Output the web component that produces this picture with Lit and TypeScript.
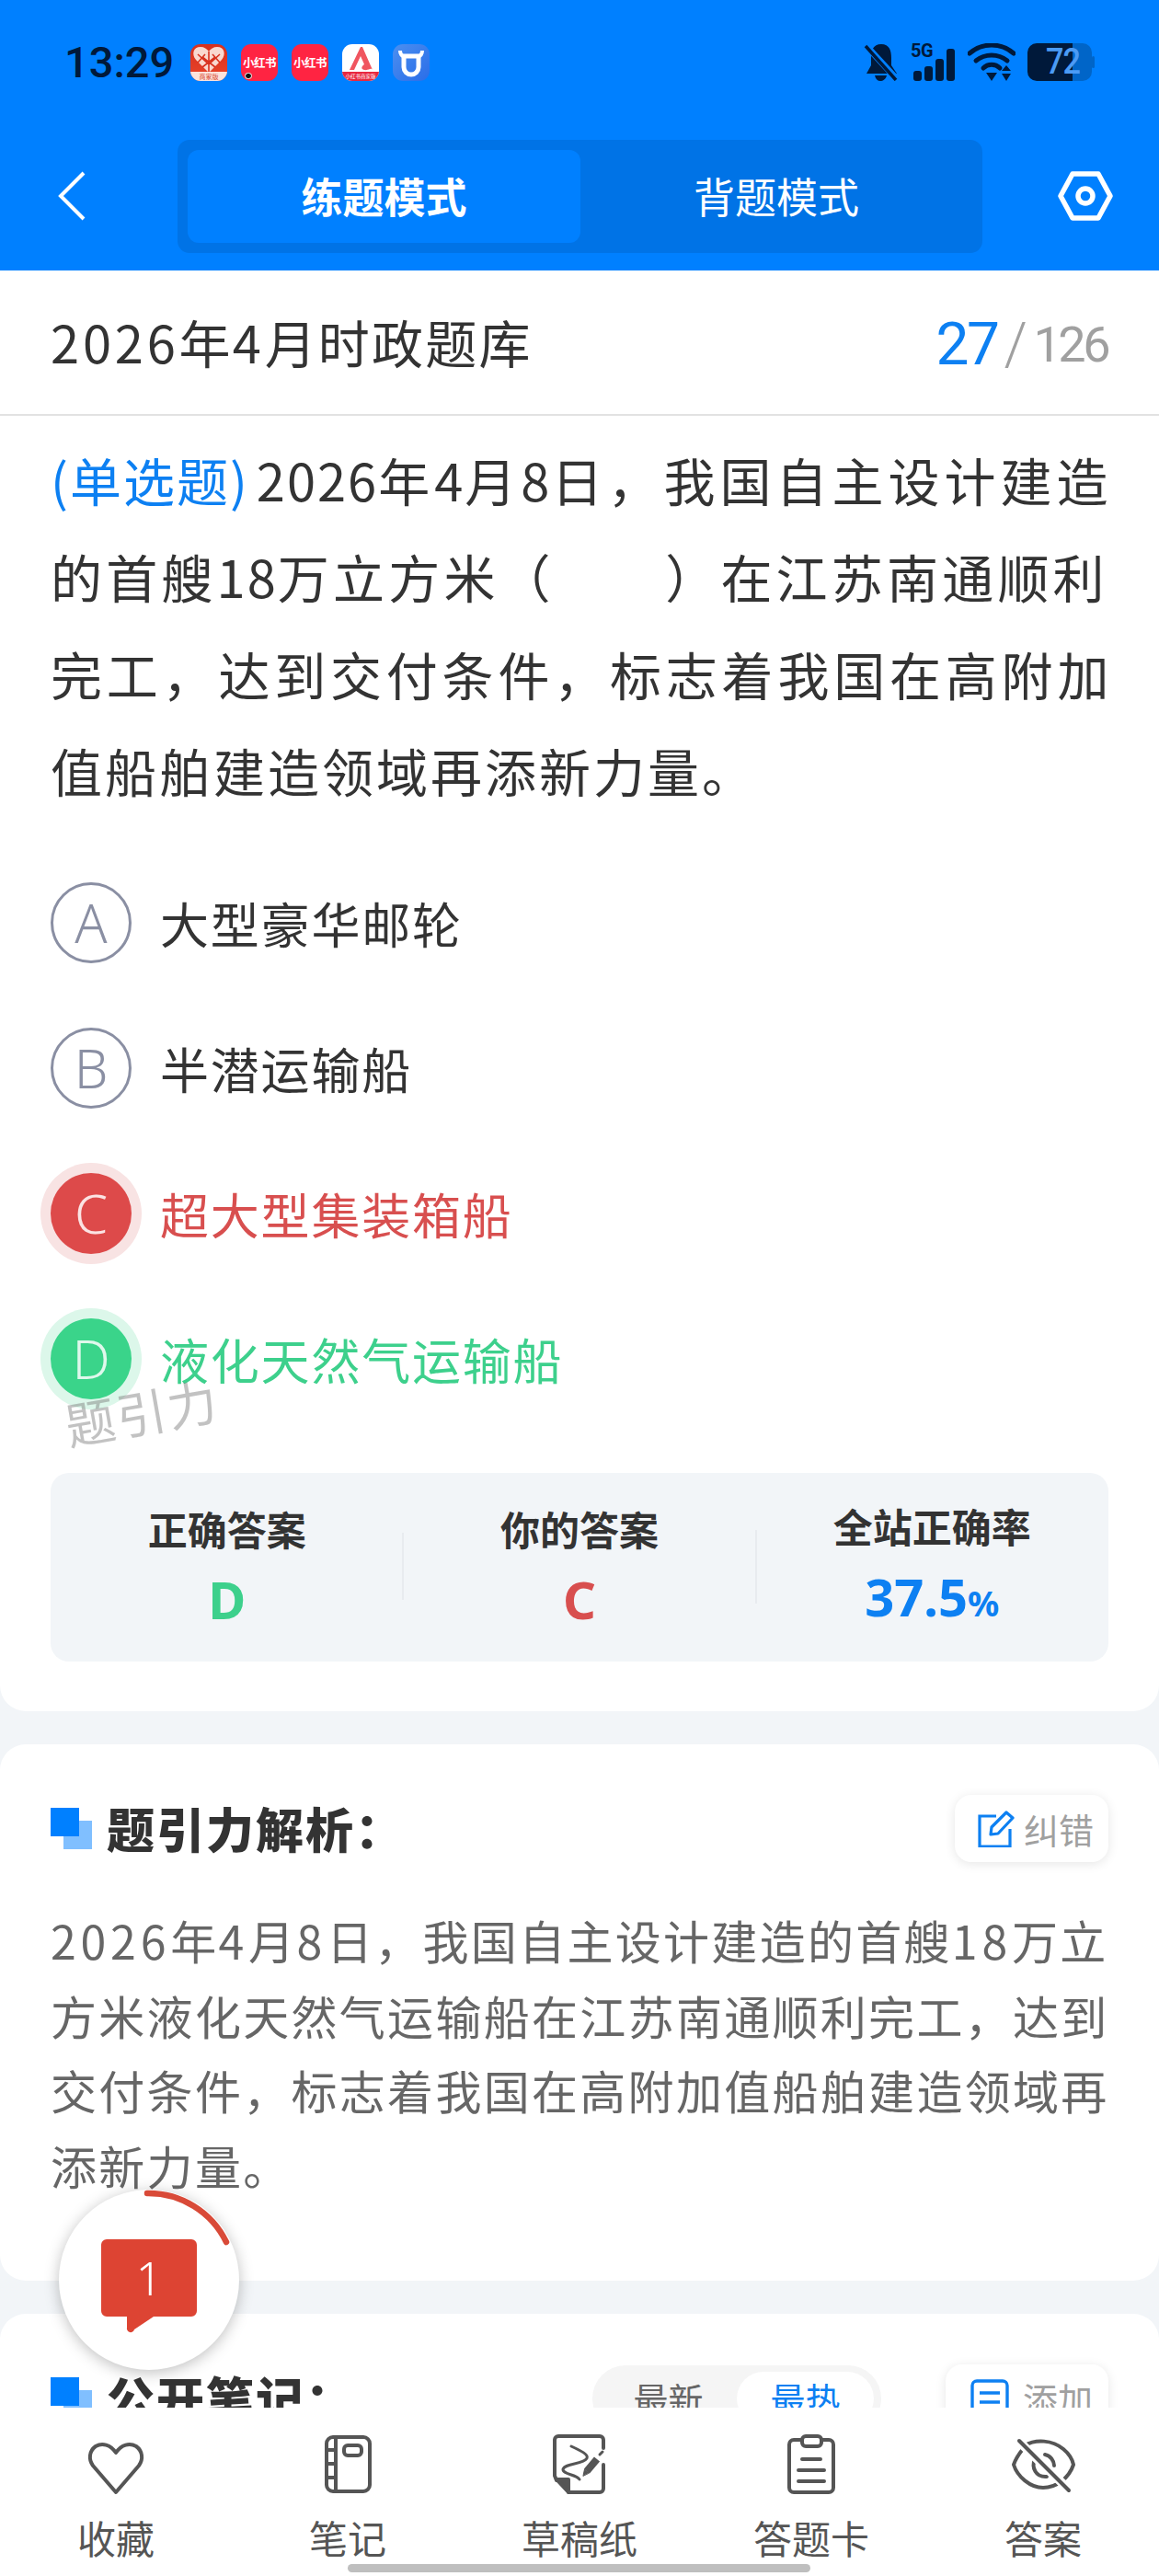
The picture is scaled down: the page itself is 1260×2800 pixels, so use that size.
import { LitElement, html, css, svg } from "lit";
import { customElement } from "lit/decorators.js";

const tabs = [
  { label: "收藏", icon: svg`<path d="M31 54 L6 25 C1 18 2 9 9 4 C16 0 25 2 31 11 C37 2 46 0 53 4 C60 9 61 18 56 25 Z" />`, x: 62, y: 55 },
  {
    label: "笔记",
    icon: svg`<rect x="2" y="2" width="47" height="59" rx="7"/><path d="M12 2V61M2 16H12M2 31H12M2 46H12"/><rect x="21" y="11" width="19" height="11" rx="4"/>`,
    x: 51,
    y: 63,
  },
  {
    label: "草稿纸",
    icon: svg`<path d="M54 14V5a4 4 0 0 0-4-4H5a4 4 0 0 0-4 4V44L3 49"/><path d="M16 62H50a4 4 0 0 0 4-4V32"/>
      <path d="M3 48H16V62Z" fill="#555"/>
      <path d="M19 12C30 17 38 21 36 25C32 32 12 30 10 37C10 43 24 42 28 48" stroke-width="3"/>
      <path d="M36 39L47 26" stroke-width="8" stroke-linecap="butt"/>
      <path d="M32 44L33.5 37L38 41Z" stroke-width="1" fill="#555"/>
      <path d="M50 21L53 18" stroke-width="3"/>`,
    x: 56,
    y: 63,
  },
  {
    label: "答题卡",
    icon: svg`<path d="M16 6H8a5 5 0 0 0-5 5v47a5 5 0 0 0 5 5h38a5 5 0 0 0 5-5V11a5 5 0 0 0-5-5h-8"/><rect x="17" y="2" width="21" height="11" rx="4"/><path d="M17 27H37M13 39H41M13 51H41"/>`,
    x: 54,
    y: 64,
  },
  {
    label: "答案",
    icon: svg`<path d="M14 6C26 -1 44 0 56 10C62 15 66 22 67 27C62 42 48 52 34 52C20 52 6 40 2 27C4 21 8 15 12 10"/>
      <path d="M25 21C21 30 26 41 38 40M36 16C42 17 46 23 46 28"/>
      <path d="M8 2L62 54" stroke="#fff" stroke-width="10"/>
      <path d="M8 1L62 55"/>`,
    x: 68,
    y: 58,
  },
];

// Latin digits keep their own tracking inside the CJK runs.
const n = (v: string) => html`<span class="num">${v}</span>`;

@customElement("app-root")
export class AppRoot extends LitElement {
  static styles = css`
    :host {
      display: flex;
      flex-direction: column;
      position: relative;
      width: 1260px;
      height: 2800px;
      overflow: hidden;
      background: #f2f5f8;
      font-family: "Noto Sans CJK SC", "Noto Sans", sans-serif;
      color: #333;
    }
    .top {
      background: #0080ff;
      height: 294px;
      flex: none;
      display: flex;
      flex-direction: column;
    }
    .status {
      height: 152px;
      padding: 47px 70px 0;
      box-sizing: border-box;
      display: flex;
      align-items: flex-start;
    }
    .clock {
      font: 500 47px/42px Roboto, sans-serif;
      color: #00193a;
      width: 137px;
    }
    .apps {
      display: flex;
      gap: 15px;
      margin-top: 1px;
    }
    .app {
      width: 40px;
      height: 40px;
      border-radius: 11px;
      position: relative;
      overflow: hidden;
      display: flex;
      align-items: center;
      justify-content: center;
    }
    .app svg {
      display: block;
    }
    .app.pdd {
      background: linear-gradient(#d8301d, #e8452b);
      flex-direction: column;
      justify-content: flex-start;
    }
    .pdd-foot {
      position: absolute;
      left: 0;
      right: 0;
      bottom: 0;
      height: 10px;
      background: #fbe3dc;
      color: #d8452f;
      font-size: 7px;
      line-height: 10px;
      text-align: center;
    }
    .app.rb {
      background: #ff2442;
      color: #fff;
      font-size: 12.5px;
      font-weight: 700;
      letter-spacing: -0.5px;
      line-height: 40px;
      white-space: nowrap;
    }
    .rb-dot {
      position: absolute;
      left: 4px;
      bottom: 2px;
      width: 8px;
      height: 7px;
      border-radius: 4px;
      background: #111;
      border: 1px solid #fff;
      box-sizing: border-box;
    }
    .app.white {
      background: #fff;
    }
    .white-foot {
      position: absolute;
      left: 0;
      right: 0;
      bottom: 0;
      height: 10px;
      background: #e8283f;
      color: #fff;
      font-size: 5.5px;
      line-height: 10px;
      text-align: center;
      white-space: nowrap;
    }
    .app.cow {
      background: linear-gradient(135deg, #4b8ff0, #2a6de8);
    }
    .sys {
      margin-left: auto;
      display: flex;
      align-items: flex-start;
      gap: 13px;
    }
    .signal {
      position: relative;
      width: 49px;
      height: 41px;
    }
    .signal svg {
      position: absolute;
      left: 0;
      top: 0;
    }
    .signal b {
      position: absolute;
      left: 0;
      top: -2px;
      font: 700 20px/20px Roboto, sans-serif;
      color: #00193a;
      letter-spacing: -0.5px;
    }
    .battery {
      width: 73px;
      height: 41px;
      position: relative;
    }
    .battery span {
      position: absolute;
      left: 20px;
      top: 0;
      font: 500 38px/41px Roboto, sans-serif;
      color: #4b9bf5;
      letter-spacing: -1px;
      transform: scaleX(0.9);
      transform-origin: left center;
    }
    .nav {
      flex: 1;
      display: flex;
      align-items: flex-start;
      padding: 0 50px 0 62px;
    }
    .back {
      width: 32px;
      height: 54px;
      margin-top: 34px;
      flex: none;
    }
    .seg {
      margin-left: 99px;
      width: 875px;
      height: 123px;
      background: #0073e6;
      border-radius: 13px;
      flex: none;
      display: flex;
      box-sizing: border-box;
      padding: 11px;
    }
    .seg div {
      flex: 1;
      display: flex;
      align-items: center;
      justify-content: center;
      color: #fff;
      font-size: 45px;
      border-radius: 12px;
      padding-bottom: 3px;
    }
    .seg .on {
      background: #0080ff;
      font-weight: 700;
      flex: none;
      width: 427px;
    }
    .gear {
      margin-left: 82px;
      margin-top: 34px;
      flex: none;
    }
    .scroll {
      flex: 1;
      min-height: 0;
      overflow: hidden;
      display: flex;
      flex-direction: column;
    }
    .titlebar {
      flex: none;
      height: 158px;
      box-sizing: border-box;
      background: #fff;
      border-bottom: 2px solid #e2e2e2;
      display: flex;
      align-items: center;
      justify-content: space-between;
      padding: 0 55px;
    }
    .titlebar h1 {
      margin: 0;
      font-size: 56px;
      font-weight: 400;
      letter-spacing: 2.2px;
      color: #333;
      padding-bottom: 4px;
    }
    .titlebar .num {
      letter-spacing: 3.8px;
    }
    .count {
      font-family: Roboto, sans-serif;
      font-weight: 400;
      display: flex;
      align-items: center;
      color: #a0a0a0;
      font-size: 54px;
      line-height: 70px;
      letter-spacing: -3.5px;
      padding: 5px 1px 0 0;
    }
    .count em {
      font-style: normal;
      color: #0d80f2;
      font-size: 64px;
      letter-spacing: -2.5px;
    }
    .count i {
      font-style: normal;
      font-weight: 300;
      font-size: 64px;
      margin: 0 10px 0 7px;
    }
    .q-card {
      flex: none;
      background: #fff;
      border-radius: 0 0 28px 28px;
      padding: 16px 55px 54px;
      position: relative;
    }
    .stem {
      margin: 0;
      font-size: 56px;
      line-height: 105.3px;
      color: #333;
      white-space: nowrap;
    }
    .stem .num {
      letter-spacing: 2px;
    }
    .stem .tag {
      color: #0d80f2;
      letter-spacing: 2px;
      margin-right: 8px;
    }
    .stem .l1 {
      letter-spacing: 5px;
    }
    .stem .l2 {
      letter-spacing: 4.2px;
    }
    .stem .l3 {
      letter-spacing: 4.8px;
    }
    .stem .l4 {
      letter-spacing: 3px;
    }
    .options {
      margin-top: 70px;
      display: flex;
      flex-direction: column;
      gap: 70px;
    }
    .option {
      display: flex;
      align-items: center;
      gap: 31px;
      font-size: 53px;
      letter-spacing: 1.8px;
      line-height: 88px;
    }
    .mark {
      flex: none;
      width: 88px;
      height: 88px;
      box-sizing: border-box;
      border-radius: 50%;
      border: 3px solid #8a8fa3;
      color: #8a8fa3;
      display: flex;
      align-items: center;
      justify-content: center;
      font: 300 58px/1 "Noto Sans", sans-serif;
      letter-spacing: 0;
    }
    .option.bad {
      color: #d84f4f;
    }
    .option.bad .mark {
      border: none;
      background: #dd4a4a;
      color: #fbe3e3;
      box-shadow: 0 0 0 11px #f8e3e3;
    }
    .option.good {
      color: #3dd08c;
    }
    .option.good .mark {
      border: none;
      background: #3ad48a;
      color: #dff8ec;
      box-shadow: 0 0 0 11px #dcf7ea;
    }
    .mark-wm {
      position: absolute;
      left: 70px;
      top: 1052px;
      font-size: 54px;
      line-height: 60px;
      color: rgba(120, 120, 120, 0.45);
      transform: rotate(-10deg);
      letter-spacing: 2px;
    }
    .stats {
      margin-top: 80px;
      height: 205px;
      padding-bottom: 8px;
      box-sizing: border-box;
      background: #f2f5f8;
      border-radius: 20px;
      display: grid;
      grid-template-columns: 1fr 1fr 1fr;
      align-items: center;
    }
    .stat {
      position: relative;
      text-align: center;
    }
    .stat + .stat::before {
      content: "";
      position: absolute;
      left: -1px;
      top: 35px;
      bottom: 29px;
      width: 2px;
      background: #e8ebef;
    }
    .stat h3 {
      margin: 0;
      font-size: 43px;
      line-height: 60px;
      font-weight: 700;
      color: #333;
    }
    .stat strong {
      display: block;
      margin-top: 17px;
      font: 700 56px/60px "Noto Sans", sans-serif;
    }
    .stat strong small {
      font-size: 38px;
    }
    .green {
      color: #3dd08c;
    }
    .red {
      color: #d84f4f;
    }
    .blue {
      color: #0d80f2;
    }
    .card {
      flex: none;
      background: #fff;
      border-radius: 28px;
      margin-top: 36px;
      padding: 55px 55px 0;
    }
    .head {
      display: flex;
      align-items: center;
      height: 73px;
    }
    .cubes {
      flex: none;
      width: 45px;
      height: 45px;
      position: relative;
    }
    .cubes::before {
      content: "";
      position: absolute;
      right: 0;
      bottom: 0;
      width: 31px;
      height: 31px;
      background: #80bfff;
    }
    .cubes::after {
      content: "";
      position: absolute;
      left: 0;
      top: 0;
      width: 31px;
      height: 31px;
      background: #0080ff;
    }
    .head h2 {
      margin: 0 0 0 16px;
      padding-bottom: 2px;
      font-size: 52px;
      font-weight: 900;
      letter-spacing: 2px;
      color: #333;
      flex: 1;
    }
    .chip {
      flex: none;
      height: 73px;
      box-sizing: border-box;
      border-radius: 18px;
      background: #fff;
      box-shadow: 0 2px 12px rgba(0, 0, 0, 0.1);
      display: flex;
      align-items: center;
      gap: 10px;
      padding: 0 16px 0 25px;
      color: #a0a0a0;
      font-size: 38px;
    }
    .chip.add {
      gap: 15px;
      padding: 0 17px 0 27px;
    }
    .explain {
      margin: 44px 0 0;
      padding-bottom: 85px;
      font-size: 50px;
      line-height: 81.5px;
      letter-spacing: 2.3px;
      color: #666;
      white-space: nowrap;
    }
    .explain .num {
      letter-spacing: 4.8px;
    }
    .pills {
      flex: none;
      width: 314px;
      height: 72px;
      border-radius: 36px;
      background: #f5f5f5;
      display: flex;
      align-items: center;
      padding: 7px 8px;
      box-sizing: border-box;
      font-size: 38px;
      color: #666;
      margin-right: 70px;
    }
    .pills span {
      flex: 1;
      text-align: center;
    }
    .pills .on {
      flex: none;
      width: 149px;
      background: #fff;
      color: #0d80f2;
      border-radius: 30px;
      line-height: 58px;
    }
    .dock {
      flex: none;
      height: 183px;
      background: #fff;
      display: grid;
      grid-template-columns: repeat(5, 1fr);
      position: relative;
    }
    .dock div {
      display: flex;
      flex-direction: column;
      align-items: center;
      color: #555;
      font-size: 42px;
      line-height: 54px;
    }
    .dock .ico {
      height: 93px;
      display: flex;
      align-items: flex-end;
      justify-content: center;
      margin-bottom: 21px;
    }
    .dock svg {
      fill: none;
      stroke: #555;
      stroke-width: 4;
      stroke-linecap: round;
      stroke-linejoin: round;
      overflow: visible;
    }
    .home {
      position: absolute;
      left: 378px;
      top: 170px;
      width: 503px;
      height: 9px;
      border-radius: 5px;
      background: #bfbfbf;
    }
    .float {
      position: absolute;
      left: 64px;
      top: 2380px;
      width: 196px;
      height: 196px;
      border-radius: 50%;
      background: #fff;
      box-shadow: 0 3px 16px rgba(0, 0, 0, 0.25);
    }
    .float svg {
      position: absolute;
      inset: 0;
    }
    .float span {
      position: absolute;
      left: 46px;
      top: 54px;
      width: 104px;
      height: 84px;
      display: flex;
      align-items: center;
      justify-content: center;
      color: #fff;
      font: 300 50px/1 "Noto Sans", sans-serif;
    }
  `;

  render() {
    return html`
      <header class="top">
        <div class="status">
          <div class="clock">13:29</div>
          <div class="apps">
            <div class="app pdd">
              <svg width="40" height="32" viewBox="0 0 40 32">
                <path d="M20 31L6 17C1 11 3 3 11 3C15 3 18 5 20 8C22 5 25 3 29 3C37 3 39 11 34 17Z" fill="#f9d8cf" />
                <path d="M20 8V31M8 11L20 22L32 11M8 20L16 11M32 20L24 11M13 25L27 14M27 25L13 14" stroke="#d8301d" stroke-width="1.6" fill="none" />
              </svg>
              <div class="pdd-foot">商家版</div>
            </div>
            <div class="app rb">小红书<i class="rb-dot"></i></div>
            <div class="app rb">小红书</div>
            <div class="app white">
              <svg width="40" height="40" viewBox="0 0 40 40">
                <path d="M20 3L8 28H13L20 13L24 22C21 24 20 27 24 28C29 29 31 25 33 28L22 3Z" fill="#f0555f" />
              </svg>
              <div class="white-foot">小红书商家版</div>
            </div>
            <div class="app cow">
              <svg width="40" height="40" viewBox="0 0 40 40" fill="none">
                <path d="M12 13H28V25A8 8 0 0 1 12 25Z" stroke="#fff" stroke-width="5" />
                <path d="M8 7C8 11 10 13 13 14M32 7C32 11 30 13 27 14" stroke="#fff" stroke-width="4" />
              </svg>
            </div>
          </div>
          <div class="sys">
            <svg width="38" height="41" viewBox="0 0 38 41">
              <path d="M19 1C28 1 30 8 30 16V24L36 33H3L8 24V16C8 8 10 1 19 1ZM12 35H25C24 39 21 41 18 41C15 41 13 39 12 35Z" fill="#00193a" />
              <path d="M1 1L36 39" stroke="#0080ff" stroke-width="7" />
              <path d="M2 3L35 40" stroke="#00193a" stroke-width="3.5" />
            </svg>
            <div class="signal">
              <b>5G</b>
              <svg width="49" height="41" viewBox="0 0 49 41">
                <rect x="3" y="30" width="9" height="11" rx="3" fill="#00193a" />
                <rect x="15" y="25" width="9" height="16" rx="3" fill="#00193a" />
                <rect x="27" y="17" width="9" height="24" rx="3" fill="#00193a" />
                <rect x="39" y="6" width="9" height="35" rx="3" fill="#00193a" />
              </svg>
            </div>
            <svg width="52" height="41" viewBox="0 0 52 41" fill="none">
              <path d="M2 11C16 -1 36 -1 50 11" stroke="#00193a" stroke-width="5" stroke-linecap="round" />
              <path d="M9 19C19 11 33 11 43 19" stroke="#00193a" stroke-width="5" stroke-linecap="round" />
              <path d="M17 27C22 22 30 22 35 27" stroke="#00193a" stroke-width="5" stroke-linecap="round" />
              <path d="M20 32H32L26 41Z" fill="#00193a" />
              <path d="M42 24L47 30H37ZM42 41L37 33H47Z" fill="#00193a" />
            </svg>
            <div class="battery">
              <svg width="73" height="41" viewBox="0 0 73 41">
                <path d="M49 0H60a10 10 0 0 1 10 10V31a10 10 0 0 1-10 10H49Z" fill="#0065c8" />
                <rect x="70" y="14" width="3" height="13" rx="1.5" fill="#0065c8" />
                <path d="M10 0H49V41H10A10 10 0 0 1 0 31V10A10 10 0 0 1 10 0Z" fill="#00193a" />
              </svg>
              <span>72</span>
            </div>
          </div>
        </div>
        <div class="nav">
          <svg class="back" viewBox="0 0 32 54" fill="none">
            <path d="M29 2L4 27L29 52" stroke="#fff" stroke-width="4" />
          </svg>
          <div class="seg">
            <div class="on">练题模式</div>
            <div>背题模式</div>
          </div>
          <svg class="gear" width="60" height="54" viewBox="0 0 60 54" fill="none">
            <path d="M16 3H44L57 27L44 51H16L3 27Z" stroke="#fff" stroke-width="5.5" stroke-linejoin="round" />
            <circle cx="30" cy="27" r="8" stroke="#fff" stroke-width="5.5" />
          </svg>
        </div>
      </header>

      <main class="scroll">
        <section class="titlebar">
          <h1>${n("2026")}年${n("4")}月时政题库</h1>
          <div class="count"><em>27</em><i>/</i>126</div>
        </section>

        <section class="q-card">
          <p class="stem">
            <span class="tag">(单选题)</span><span class="l1">${n("2026")}年${n("4")}月${n("8")}日，我国自主设计建造</span><br /><span class="l2">的首艘${n("18")}万立方米（　　）在江苏南通顺利</span><br /><span class="l3">完工，达到交付条件，标志着我国在高附加</span><br /><span class="l4">值船舶建造领域再添新力量。</span>
          </p>
          <div class="options">
            <div class="option"><div class="mark">A</div>大型豪华邮轮</div>
            <div class="option"><div class="mark">B</div>半潜运输船</div>
            <div class="option bad"><div class="mark">C</div>超大型集装箱船</div>
            <div class="option good"><div class="mark">D</div>液化天然气运输船</div>
          </div>
          <div class="stats">
            <div class="stat"><h3>正确答案</h3><strong class="green">D</strong></div>
            <div class="stat"><h3>你的答案</h3><strong class="red">C</strong></div>
            <div class="stat"><h3>全站正确率</h3><strong class="blue">37.5<small>%</small></strong></div>
          </div>
          <div class="mark-wm">题引力</div>
        </section>

        <section class="card">
          <div class="head">
            <div class="cubes"></div>
            <h2>题引力解析：</h2>
            <div class="chip">
              <svg width="40" height="40" viewBox="0 0 40 40" fill="none" stroke="#0d80f2" stroke-width="3.2">
                <path d="M20 6H2V39H35V20" />
                <path d="M14 26L15 18L31 2L38 8L22 25Z" stroke-linejoin="round" />
              </svg>
              纠错
            </div>
          </div>
          <p class="explain">
            ${n("2026")}年${n("4")}月${n("8")}日，我国自主设计建造的首艘${n("18")}万立<br />方米液化天然气运输船在江苏南通顺利完工，达到<br />交付条件，标志着我国在高附加值船舶建造领域再<br />添新力量。
          </p>
        </section>

        <section class="card">
          <div class="head">
            <div class="cubes"></div>
            <h2>公开笔记：</h2>
            <div class="pills"><span>最新</span><span class="on">最热</span></div>
            <div class="chip add">
              <svg width="42" height="42" viewBox="0 0 42 42" fill="none" stroke="#0d80f2" stroke-width="3.4">
                <rect x="2" y="2" width="38" height="38" rx="5" />
                <path d="M10 15H32M10 25H32" />
              </svg>
              添加
            </div>
          </div>
        </section>
      </main>

      <nav class="dock">
        ${tabs.map(
          (t) => html`<div>
            <span class="ico"><svg width=${t.x} height=${t.y} viewBox="0 0 ${t.x} ${t.y}">${t.icon}</svg></span>
            ${t.label}
          </div>`
        )}
        <i class="home"></i>
      </nav>

      <aside class="float">
        <svg width="196" height="196" viewBox="0 0 196 196" fill="none">
          <path d="M96 4A94 94 0 0 1 182 57" stroke="#d94a38" stroke-width="6.5" stroke-linecap="round" />
          <path d="M52 54H144a6 6 0 0 1 6 6V132a6 6 0 0 1-6 6H103L82 152a4 4 0 0 1-8-2V138H52a6 6 0 0 1-6-6V60a6 6 0 0 1 6-6Z" fill="#dd4433" />
        </svg>
        <span>1</span>
      </aside>
    `;
  }
}
